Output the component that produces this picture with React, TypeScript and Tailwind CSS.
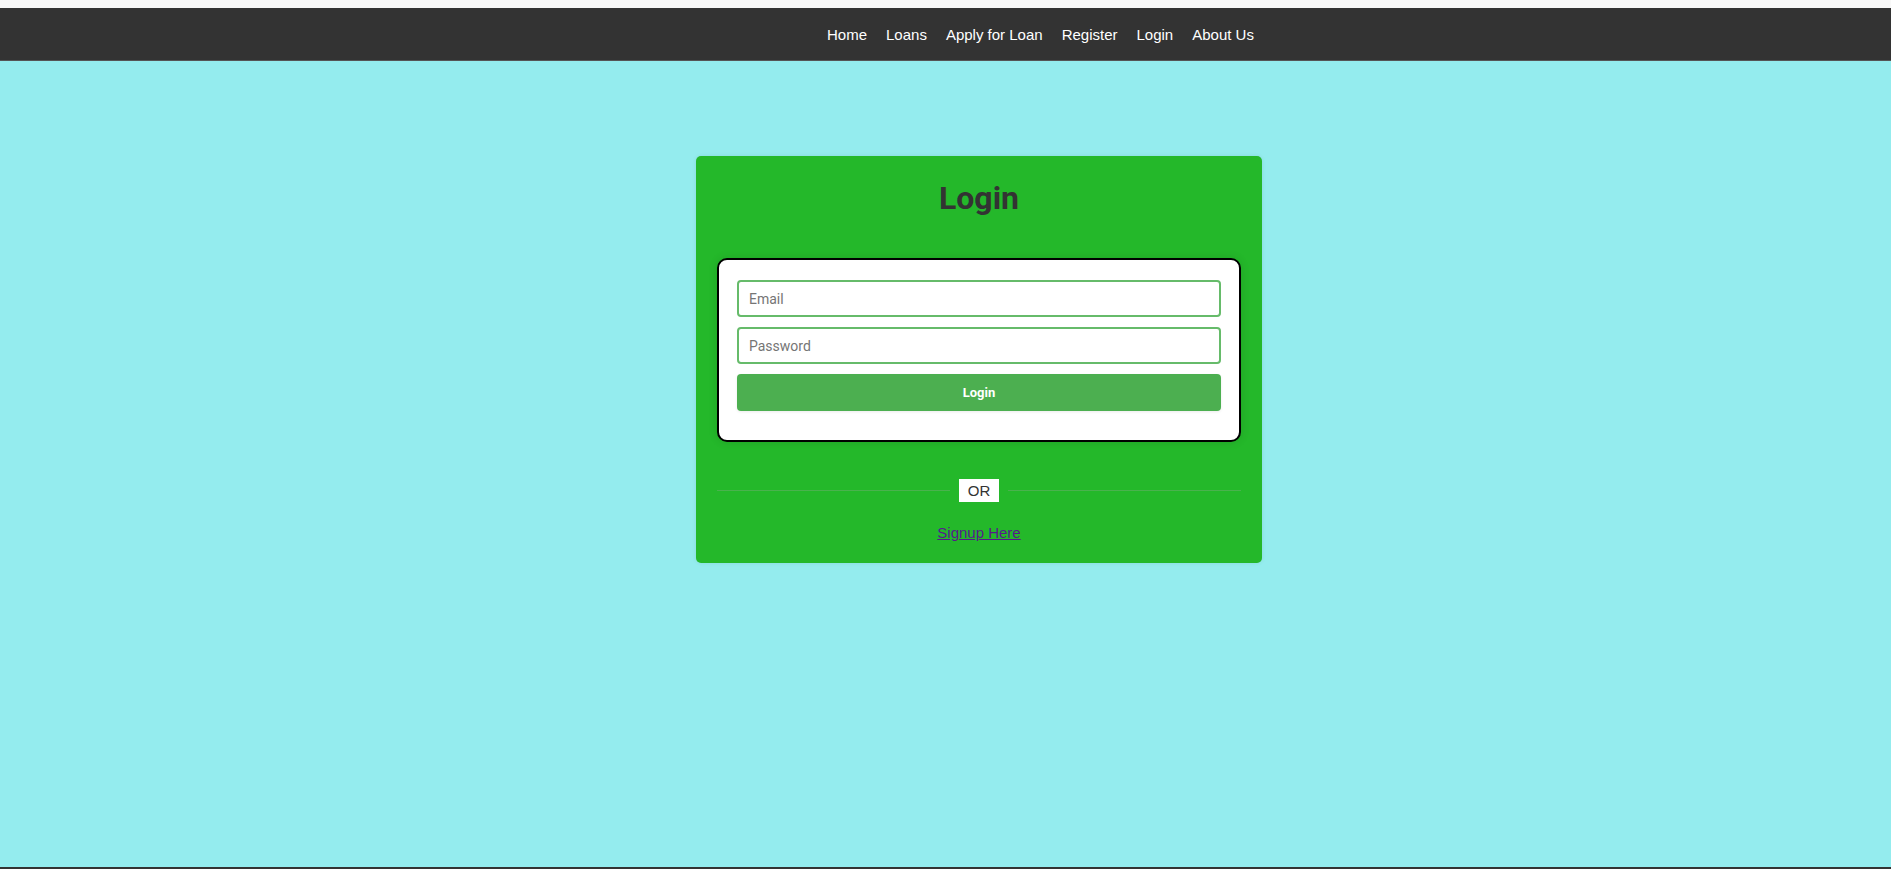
import React from "react";

export default function App() {
  const links = ["Home", "Loans", "Apply for Loan", "Register", "Login", "About Us"];
  return (
    <div className="flex h-[869px] flex-col overflow-hidden bg-[#94ecee]">
      <div className="h-[8px] shrink-0 bg-[#f8f8f8]" />
      <nav className="flex h-[53px] shrink-0 items-center border-b border-[#555] bg-[#333] font-['Liberation_Sans',Arial,sans-serif] text-[15px] text-white">
        <ul className="ml-[827px] flex gap-[19px] pt-[2px]">
          {links.map((l) => (
            <li key={l}>
              <a href="#" className="leading-[17px] text-white">
                {l}
              </a>
            </li>
          ))}
        </ul>
      </nav>
      <main className="flex-1">
        <div className="ml-[696px] mt-[95px] w-[566px] rounded-[5px] bg-[#24b82a] pt-[23px] pb-[19px] shadow-[0_0_4px_rgba(0,0,0,0.08)]">
          <h2 className="text-center font-['Roboto',sans-serif] text-[32px] font-bold leading-[38px] text-[#333]">
            Login
          </h2>
          <div className="mx-[21px] mt-[41px] rounded-[10px] border-2 border-black bg-white px-[18px] pt-[20px] pb-[29px] shadow-[0_0_10px_rgba(0,0,0,0.12)]">
            <form className="flex flex-col gap-[10px]" onSubmit={(e) => e.preventDefault()}>
              <input
                type="email"
                placeholder="Email"
                className="h-[37px] w-full rounded-[4px] border-2 border-[#66bb6a] bg-white px-[10px] font-['Roboto',sans-serif] text-[14px] text-[#333] outline-none placeholder:text-[#757575]"
              />
              <input
                type="password"
                placeholder="Password"
                className="h-[37px] w-full rounded-[4px] border-2 border-[#66bb6a] bg-white px-[10px] font-['Roboto',sans-serif] text-[14px] text-[#333] outline-none placeholder:text-[#757575]"
              />
              <button
                type="submit"
                className="h-[37px] w-full rounded-[4px] bg-[#4caf50] font-['Roboto',sans-serif] text-[13px] font-bold text-white shadow-[0_1px_3px_rgba(0,0,0,0.08)]"
              >
                Login
              </button>
            </form>
          </div>
          <div className="mx-[21px] mt-[37px] flex items-center">
            <div className="h-px flex-1 bg-[#4ab24e]" />
            <span className="mx-[9px] bg-white px-[9px] py-[3px] font-['Liberation_Sans',Arial,sans-serif] text-[15px] leading-[17px] text-[#333]">
              OR
            </span>
            <div className="h-px flex-1 bg-[#4ab24e]" />
          </div>
          <div className="mt-[18px] text-center">
            <a
              href="#"
              className="font-['Liberation_Sans',Arial,sans-serif] text-[15px] leading-[17px] text-[#551a8b] underline"
            >
              Signup Here
            </a>
          </div>
        </div>
      </main>
      <div className="h-[2px] shrink-0 bg-[#333]" />
    </div>
  );
}
